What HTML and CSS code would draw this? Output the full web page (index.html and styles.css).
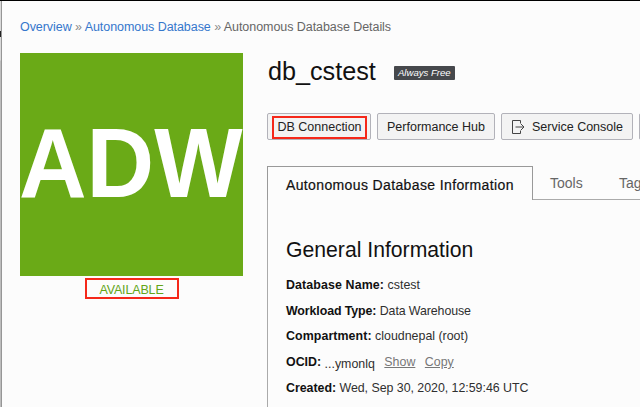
FILE: index.html
```html
<!DOCTYPE html>
<html lang="en">
<head>
<meta charset="utf-8">
<title>Autonomous Database Details</title>
<link rel="stylesheet" href="styles.css">
</head>
<body>
<div class="window">
  <div class="edge"><span class="edge-mark"></span></div>
  <div class="page">
    <nav class="breadcrumb"><a>Overview</a> <span class="sep">»</span> <a>Autonomous Database</a> <span class="sep">»</span> <span>Autonomous Database Details</span></nav>
    <div class="columns">
      <aside class="status">
        <div class="tile"><span class="tile-text">ADW</span></div>
        <div class="state"><span>AVAILABLE</span></div>
      </aside>
      <main class="details">
        <header class="title-row">
          <h1>db_cstest</h1>
          <span class="tag"><span>Always Free</span></span>
        </header>
        <div class="actions">
          <div class="button connection"><span class="marked"><span>DB Connection</span></span></div>
          <div class="button hub"><span>Performance Hub</span></div>
          <div class="button console"><svg viewBox="0 0 14 14" width="14" height="14"><path d="M9.500 3.500V.5H1.500v13h8v-3M4.500 7H13M10 4 13 7 10 10"/></svg><span>Service Console</span></div>
          <div class="button more"></div>
        </div>
        <div class="tabs">
          <div class="tab active"><span>Autonomous Database Information</span></div>
          <div class="tab tools"><span>Tools</span></div>
          <div class="tab tags"><span>Tag</span></div>
        </div>
        <section class="panel">
          <h2><span>General Information</span></h2>
          <p><b class="name">Database Name:</b> cstest</p>
          <p class="workload"><b>Workload Type:</b> Data Warehouse</p>
          <p><b class="compartment">Compartment:</b> cloudnepal (root)</p>
          <p class="ocid"><b>OCID:</b> <span class="value">...ymonlq</span><a>Show</a><a>Copy</a></p>
          <p class="created"><b>Created:</b> Wed, Sep 30, 2020, 12:59:46 UTC</p>
        </section>
      </main>
    </div>
  </div>
</div>
</body>
</html>
```
FILE: styles.css
```css
* { box-sizing: border-box; }
body {
  margin: 0;
  overflow: hidden;
  background: #fcfcfc;
  color: #2f2f2f;
  font: 12.5px/16px "Liberation Sans", Arial, sans-serif;
}
h1, h2, p { margin: 0; font-weight: 400; }
.window {
  display: flex;
  width: 640px;
  height: 407px;
  border-top: 1px solid #000;
  overflow: hidden;
}
.edge {
  flex: none;
  width: 2px;
  padding-top: 30px;
  background: linear-gradient(#d9d9d9 59px, #bdbdbd 60px);
  border-right: 1px solid #969696;
}
.edge-mark { display: block; height: 6px; background: #222; }
.page { flex: none; width: 740px; padding: 18px 0 0 18px; }
.breadcrumb { height: 34px; white-space: nowrap; color: #666; letter-spacing: -0.06px; }
.breadcrumb a { color: #3577cc; }
.breadcrumb .sep { color: #888; }
.columns { display: flex; gap: 24px; }
.status { flex: none; width: 223px; }
.tile {
  height: 223px;
  padding-top: 55px;
  background: #6aaa17;
  color: #fff;
  font-size: 98px;
  font-weight: 700;
  line-height: 111px;
}
.tile-text { display: inline-block; margin-left: -1px; transform: scaleX(.955); transform-origin: left; }
.state {
  width: 94px;
  height: 21px;
  margin: 2px 0 0 65px;
  border: 2px solid #f5281a;
  color: #63a517;
  font-size: 12.5px;
  line-height: 20px;
  text-align: center;
  letter-spacing: -.15px;
}
.state span { margin-right: 1px; }
.details { flex: none; width: 450px; }
.title-row { display: flex; align-items: flex-start; height: 60px; gap: 18px; padding-left: 1px; }
h1 { color: #111; font-size: 25.2px; line-height: 36px; }
.tag {
  height: 13.5px;
  width: 61px;
  margin-top: 13px;
  border-radius: 1px;
  background: #46484c;
  color: #fff;
  font-size: 9.6px;
  font-style: italic;
  line-height: 13px;
  text-align: center;
  white-space: nowrap;
}
.actions { display: flex; gap: 6px; height: 53px; }
.button {
  display: flex;
  align-items: center;
  justify-content: center;
  flex: none;
  height: 27px;
  border: 1px solid #b2b2b9;
  border-radius: 2px;
  background: #f3f3f3;
  color: #222;
  white-space: nowrap;
}
.connection { width: 104px; }
.marked {
  width: 95px;
  height: 23px;
  margin: 1px 0 0 1px;
  border: 2px solid #f5281a;
  line-height: 18px;
  text-align: center;
}
.hub { width: 118px; }
.console { width: 132px; gap: 7px; }
.console svg { fill: none; stroke: #444; stroke-width: 1; }
.more { width: 60px; }
.tabs { display: flex; height: 34px; font-size: 14px; }
.tab {
  flex: none;
  height: 34px;
  border-bottom: 1px solid #aaa;
  color: #666;
  line-height: 35px;
  white-space: nowrap;
}
.tab.active {
  width: 266px;
  padding-left: 18px;
  border: 1px solid #999;
  border-bottom: 0;
  color: #111;
  font-size: 14px;
  letter-spacing: .37px;
  line-height: 36px;
  -webkit-text-stroke: .2px #111;
}
.tab.tools { width: 68px; padding-left: 17px; }
.tab.tags { width: 160px; padding-left: 18px; }
.panel {
  height: 260px;
  padding: 34px 0 0 18px;
  border-left: 1px solid #aaa;
  font-size: 12.4px;
}
h2 { height: 42px; color: #111; font-size: 21.2px; line-height: 31px; }
.panel p { height: 25.7px; line-height: 18px; white-space: nowrap; }
.panel b { color: #111; }
.panel .name { letter-spacing: .12px; }
.panel .compartment { letter-spacing: .08px; }
.panel .workload { letter-spacing: -.1px; }
.ocid a { margin-left: 9.5px; color: #777; text-decoration: underline; }
.ocid .value { position: relative; top: 2px; }
.panel .created { padding-top: .5px; letter-spacing: -.03px; }
```
